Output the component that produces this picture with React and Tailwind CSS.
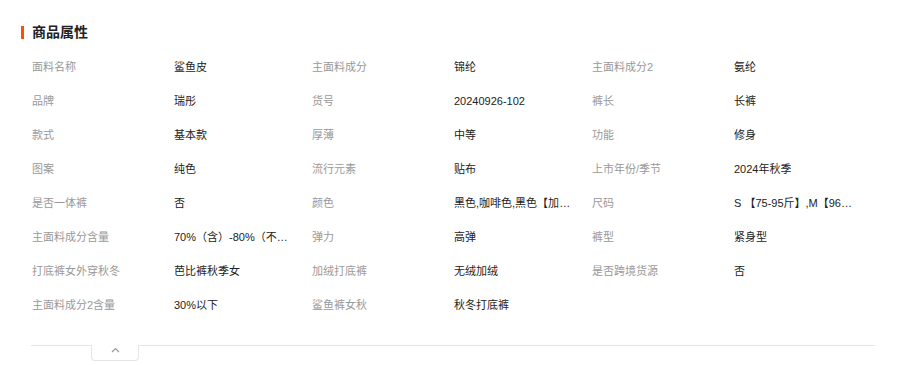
import React from "react";

// 商品属性 data, three per row
const attrs = [
  ["面料名称", "鲨鱼皮"],
  ["主面料成分", "锦纶"],
  ["主面料成分2", "氨纶"],
  ["品牌", "瑞彤"],
  ["货号", "20240926-102"],
  ["裤长", "长裤"],
  ["款式", "基本款"],
  ["厚薄", "中等"],
  ["功能", "修身"],
  ["图案", "纯色"],
  ["流行元素", "贴布"],
  ["上市年份/季节", "2024年秋季"],
  ["是否一体裤", "否"],
  ["颜色", "黑色,咖啡色,黑色【加绒】,咖啡色【加绒】"],
  ["尺码", "S 【75-95斤】,M【96-110斤】,L【111-125斤】"],
  ["主面料成分含量", "70%（含）-80%（不含）"],
  ["弹力", "高弹"],
  ["裤型", "紧身型"],
  ["打底裤女外穿秋冬", "芭比裤秋季女"],
  ["加绒打底裤", "无绒加绒"],
  ["是否跨境货源", "否"],
  ["主面料成分2含量", "30%以下"],
  ["鲨鱼裤女秋", "秋冬打底裤"],
];

const Attr = ({ label, value }) => (
  <div className="flex h-[34px] items-center">
    <span className="w-[142px] shrink-0 truncate text-[#999]">{label}</span>
    <span className="max-w-[120px] truncate text-[#222]">{value}</span>
  </div>
);

export default function App() {
  return (
    <div
      className="w-[905px] h-[365px] overflow-hidden bg-white pt-[22px] text-[11px]"
      style={{ fontFamily: '"Liberation Sans", "Noto Sans CJK SC", sans-serif' }}
    >
      {/* title */}
      <div className="flex h-5 items-center pl-[21px]">
        <span className="mr-2 h-[13px] w-[3px] bg-[#ff5000]" />
        <h2 className="text-[14px] font-bold text-[#222]">商品属性</h2>
      </div>

      {/* attribute grid */}
      <div className="mt-[8px] grid grid-cols-[280px_280px_280px] pl-8">
        {attrs.map(([label, value]) => (
          <Attr key={label} label={label} value={value} />
        ))}
      </div>

      {/* divider with collapse tab */}
      <div className="ml-[31px] mt-[23px] flex w-[844px]">
        <div className="w-[60px] border-t border-[#e5e5e5]" />
        <div className="flex h-4 w-12 justify-center rounded-b-[4px] border border-t-0 border-[#e5e5e5] pt-[2px]">
          <svg width="9" height="6" viewBox="0 0 9 6" fill="none">
            <path d="M1 5 L4.5 1.5 L8 5" stroke="#999" strokeWidth="1.2" />
          </svg>
        </div>
        <div className="flex-1 border-t border-[#e5e5e5]" />
      </div>
    </div>
  );
}
